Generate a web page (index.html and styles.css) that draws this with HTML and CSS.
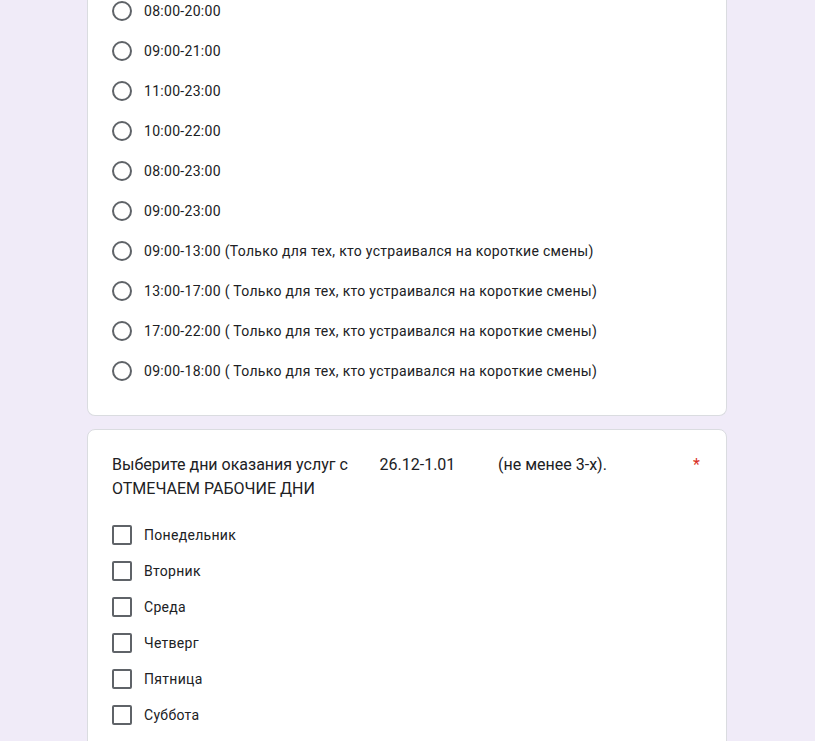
FILE: index.html
```html
<!DOCTYPE html>
<html lang="ru">
<head>
<meta charset="utf-8">
<link rel="stylesheet" href="styles.css">
</head>
<body>
<div class="page">
  <div class="card card-top">
    <div class="radio-list">
      <div class="radio-row"><span class="radio"></span><span class="label">08:00-20:00</span></div>
      <div class="radio-row"><span class="radio"></span><span class="label">09:00-21:00</span></div>
      <div class="radio-row"><span class="radio"></span><span class="label">11:00-23:00</span></div>
      <div class="radio-row"><span class="radio"></span><span class="label">10:00-22:00</span></div>
      <div class="radio-row"><span class="radio"></span><span class="label">08:00-23:00</span></div>
      <div class="radio-row"><span class="radio"></span><span class="label">09:00-23:00</span></div>
      <div class="radio-row"><span class="radio"></span><span class="label">09:00-13:00 (Только для тех, кто устраивался на короткие смены)</span></div>
      <div class="radio-row"><span class="radio"></span><span class="label">13:00-17:00 ( Только для тех, кто устраивался на короткие смены)</span></div>
      <div class="radio-row"><span class="radio"></span><span class="label">17:00-22:00 ( Только для тех, кто устраивался на короткие смены)</span></div>
      <div class="radio-row"><span class="radio"></span><span class="label">09:00-18:00 ( Только для тех, кто устраивался на короткие смены)</span></div>
    </div>
  </div>
  <div class="card card-q">
    <div class="q-head">
      <div class="q-title">Выберите дни оказания услуг с        26.12-1.01<span class="gap">          </span>(не менее 3-х).
ОТМЕЧАЕМ РАБОЧИЕ ДНИ</div>
      <span class="req">*</span>
    </div>
    <div class="check-list">
      <div class="check-row"><span class="check"></span><span class="label">Понедельник</span></div>
      <div class="check-row"><span class="check"></span><span class="label">Вторник</span></div>
      <div class="check-row"><span class="check"></span><span class="label">Среда</span></div>
      <div class="check-row"><span class="check"></span><span class="label">Четверг</span></div>
      <div class="check-row"><span class="check"></span><span class="label">Пятница</span></div>
      <div class="check-row"><span class="check"></span><span class="label">Суббота</span></div>
    </div>
  </div>
</div>
</body>
</html>
```
FILE: styles.css
```css
html, body {
  margin: 0;
  padding: 0;
  background: #f0ebf8;
  font-family: Roboto, "Noto Sans", Arial, sans-serif;
  color: #202124;
  overflow: hidden;
}
.page {
  width: 640px;
  margin: -9px 0 0 calc(50% - 320.5px);
  display: flex;
  flex-direction: column;
  gap: 13px;
}
.card {
  background: #fff;
  border: 1px solid #dadce0;
  border-radius: 8px;
  padding: 0 24px 24px;
}
.card-top {
  border-top: none;
  border-top-left-radius: 0;
  border-top-right-radius: 0;
}
.radio-list {
  display: flex;
  flex-direction: column;
}
.radio-row {
  height: 40px;
  display: flex;
  align-items: center;
}
.radio {
  box-sizing: border-box;
  width: 20px;
  height: 20px;
  border: 2px solid #5f6368;
  border-radius: 50%;
  flex: none;
}
.label {
  margin-left: 12px;
  font-size: 14px;
  line-height: 20px;
  letter-spacing: 0.3px;
  color: #202124;
}
.card-q {
  padding-top: 23px;
}
.q-head {
  display: flex;
  justify-content: space-between;
  align-items: flex-start;
  padding-bottom: 16px;
}
.q-title {
  font-size: 16px;
  line-height: 24px;
  letter-spacing: 0;
  white-space: pre-wrap;
  color: #202124;
}
.q-title .gap {
  word-spacing: 0.3px;
}
.req {
  color: #d93025;
  font-size: 16px;
  line-height: 24px;
  margin-right: 2px;
}
.check-list {
  display: flex;
  flex-direction: column;
}
.check-row {
  height: 36px;
  display: flex;
  align-items: center;
}
.check {
  box-sizing: border-box;
  width: 20px;
  height: 20px;
  border: 2px solid #5f6368;
  border-radius: 2px;
  flex: none;
}
```
